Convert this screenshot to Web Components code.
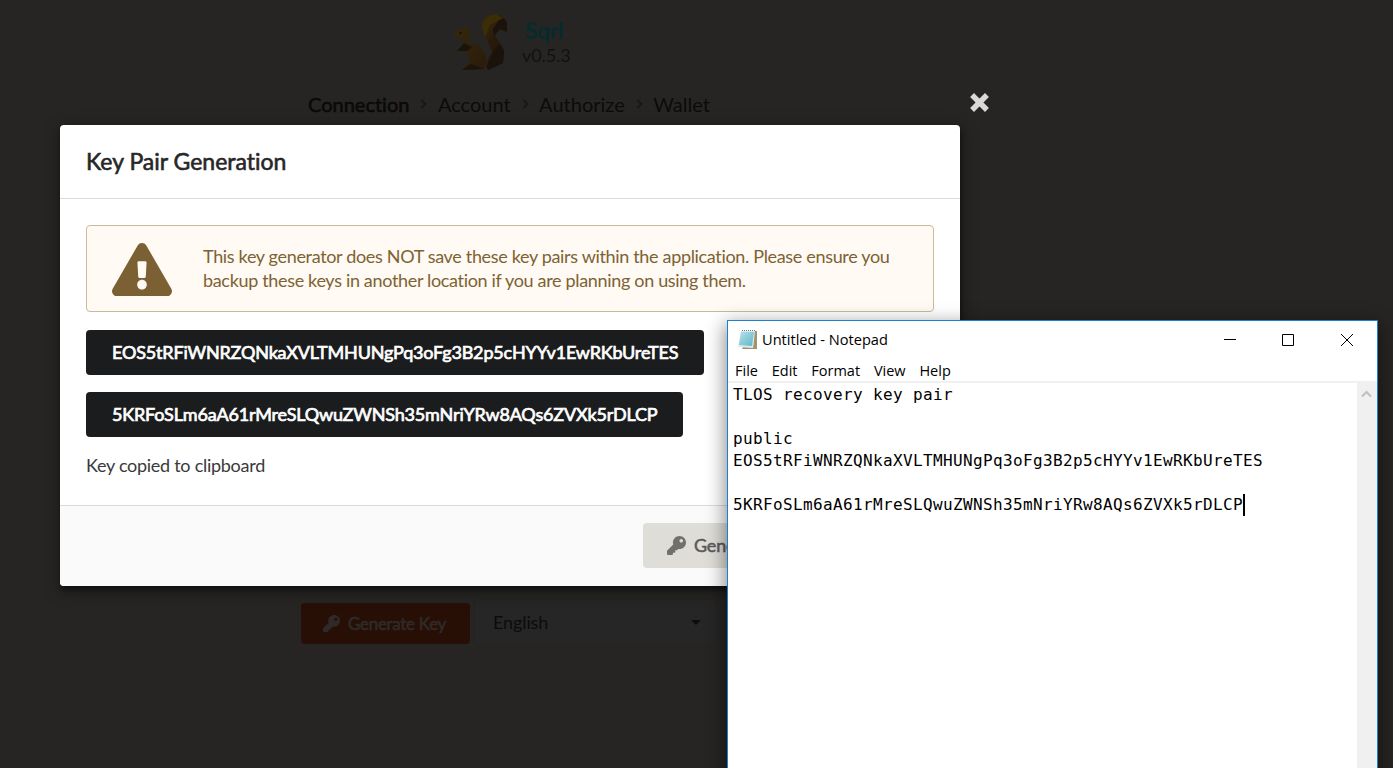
<!DOCTYPE html>
<html lang="en">
<head>
<meta charset="utf-8">
<title>Sqrl</title>
<style>
html,body{margin:0;height:100%;overflow:hidden;background:#262523}
</style>
</head>
<body>
<sqrl-desktop></sqrl-desktop>
<script>
const define = (name, html) => customElements.define(name, class extends HTMLElement {
  constructor() {
    super();
    this.attachShadow({ mode: 'open' }).innerHTML = html;
  }
});

define('key-icon', `
<style>:host{display:block;width:17px;height:17px}svg{display:block;width:100%;height:100%}</style>
<svg viewBox="0 0 512 512"><path fill="currentColor" d="M512 176.001C512 273.203 433.202 352 336 352c-11.220 0-22.190-1.062-32.827-3.069l-24.012 27.014A23.999 23.999 0 0 1 261.223 384H224v40c0 13.255-10.745 24-24 24h-40v40c0 13.255-10.745 24-24 24H24c-13.255 0-24-10.745-24-24v-78.059c0-6.365 2.529-12.470 7.029-16.971l161.802-161.802C163.108 213.814 160 195.271 160 176 160 78.798 238.797.001 335.999 0 433.488-.001 512 78.511 512 176.001zM336 128c0 26.510 21.490 48 48 48s48-21.490 48-48-21.490-48-48-48-48 21.490-48 48z"/></svg>`);

define('squirrel-logo', `
<style>:host{display:block;width:56px;height:57px}svg{display:block}</style>
<svg width="56" height="57" viewBox="0 0 56 57">
<defs>
<linearGradient id="t" x1="0" y1="0" x2=".6" y2="1"><stop offset="0" stop-color="#3c2e07"/><stop offset=".5" stop-color="#291b0b"/><stop offset="1" stop-color="#1d150b"/></linearGradient>
<linearGradient id="b" x1="0" y1="0" x2="1" y2="1"><stop offset="0" stop-color="#35280a"/><stop offset="1" stop-color="#2a1b0a"/></linearGradient>
</defs>
<path fill="url(#t)" d="M29 8 Q34 0 43 0 Q50 1 54 8 L54 18 47 15 Q42 16 42 21 L51 36 50 49 35 56 33 53 36 43 39 38 33 24 29 17Z"/>
<path fill="#1b120b" d="M50 4 54 9 54 18 47 15 41 22 40 15 46 6ZM41 36 47 30 51 37 50 49 35 56 34 52Z"/>
<path fill="#3b2d08" d="M29 13 Q32 1 43 0 L50 4 37 11 32 24Z"/>
<path fill="url(#b)" d="M0 21 6 15 11 15 14 12 16 18 17 24 15 29 25 31 32 39 34 48 31 55 9 56 17 48 14 36 4 37 9 32 10 25Z"/>
<path fill="#1c130b" d="m4 37 7-8 8 4-5 4ZM9 56l9-6 13 5Z"/>
<circle cx="7.500" cy="19" r="1.200" fill="#14100a"/>
</svg>`);

define('bread-crumb', `
<style>
:host{display:flex;align-items:center;font:400 20px/28px Lato,sans-serif;color:#0b0b0b;font-variant-ligatures:none}
svg{display:block;width:7px;height:10px;margin-left:11px;margin-right:10.500px}
path{fill:none;stroke:#171716;stroke-width:2}
.active{-webkit-text-stroke:.6px #090909}
</style>
<span class="active">Connection</span><svg viewBox="0 0 7 10"><path d="m1.500 1 4 4-4 4"/></svg>
<span>Account</span><svg viewBox="0 0 7 10"><path d="m1.500 1 4 4-4 4"/></svg>
<span>Authorize</span><svg viewBox="0 0 7 10"><path d="m1.500 1 4 4-4 4"/></svg>
<span>Wallet</span>`);

define('sqrl-page', `
<style>
:host{display:flex;flex-direction:column;width:1020px;height:768px;font-family:Lato,sans-serif}
header{display:flex;padding:14px 0 0 453px;height:79px;box-sizing:border-box}
.name{padding-left:13px;font-size:18px;color:#111}
b{display:block;font-size:22.500px;line-height:24px;font-weight:700;color:#052c2d;padding:5px 0 0 3px;letter-spacing:-.2px}
.v{display:block;line-height:24px;letter-spacing:-.1px}
bread-crumb{padding:11px 0 0 308px}
.row{display:flex;margin:481px 0 0 301px;align-items:center;gap:4px}
.btn{display:flex;align-items:center;gap:8px;width:169px;height:41px;box-sizing:border-box;margin-top:3px;padding-left:22px;background:#270f06;border-radius:4px;color:#2f2a28;font-size:17px;letter-spacing:-.3px;-webkit-text-stroke:.6px #2f2a28}
.sel{display:flex;align-items:center;justify-content:space-between;width:243px;height:46px;box-sizing:border-box;border:1px solid #232323;border-radius:4px;background:#262626;padding:0 15px 0 18px;font-size:18px;letter-spacing:-.1px;color:#0c0c0c}
i{border:5px solid transparent;border-top-color:#0c0c0c;border-bottom:0}
</style>
<header><squirrel-logo></squirrel-logo><div class="name"><b>Sqrl</b><span class="v">v0.5.3</span></div></header>
<bread-crumb></bread-crumb>
<div class="row"><div class="btn"><key-icon></key-icon><span>Generate Key</span></div><div class="sel"><span>English</span><i></i></div></div>`);

define('warning-message', `
<style>
:host{display:flex;align-items:center;box-sizing:border-box;height:87px;padding-left:25px;border:1px solid #c9ba9b;border-radius:4px;background:#fffaf3;color:#7d6234}
svg{display:block;width:60px;height:53.300px;margin:2px 31px 0 0;flex:none}
.text{font-size:18px;line-height:24px;white-space:nowrap;margin-top:-2px;letter-spacing:-.33px}
</style>
<svg viewBox="0 0 576 512"><path fill="#7a6033" d="M569.517 440.013C587.975 472.007 564.806 512 527.940 512H48.054c-36.937 0-59.999-40.055-41.577-71.987L246.423 23.985c18.467-32.009 64.720-31.951 83.154 0l239.940 416.028zM288 354c-25.405 0-46 20.595-46 46s20.595 46 46 46 46-20.595 46-46-20.595-46-46-46zm-43.673-165.346l7.418 136c.347 6.364 5.609 11.346 11.982 11.346h48.546c6.373 0 11.635-4.982 11.982-11.346l7.418-136c.375-6.874-5.098-12.654-11.982-12.654h-63.383c-6.884 0-12.356 5.780-11.981 12.654z"/></svg>
<div class="text"><slot></slot></div>`);

define('key-button', `
<style>
:host{display:flex;align-items:center;box-sizing:border-box;height:45px;padding:0 26px 1px;border-radius:4px;background:#1b1c1d;color:#fff;font-size:18px;letter-spacing:-.175px;-webkit-text-stroke:.7px #fff}
</style><slot></slot>`);

define('key-modal', `
<style>
:host{display:flex;flex-direction:column;width:900px;height:461px;background:#fff;border-radius:4px;font:400 18px/24px Lato,sans-serif;color:#3a3a3a;box-shadow:1px 4px 5px rgba(0,0,0,.4),1px 4px 16px 2px rgba(0,0,0,.3);overflow:hidden;font-variant-ligatures:none}
h1{margin:0;height:74px;box-sizing:border-box;border-bottom:1px solid #dbdbdc;padding:23px 26px 0;font:400 23px/26px Lato,sans-serif;font-variant-ligatures:none;color:#272727;-webkit-text-stroke:.6px #272727}
section{display:flex;flex-direction:column;align-items:flex-start;padding:26px 26px 0;flex:1}
warning-message{align-self:stretch;margin-bottom:18px}
key-button{margin-bottom:17px}
.copied{margin-top:-1px;letter-spacing:-.27px}
footer{display:flex;justify-content:flex-end;height:81px;box-sizing:border-box;border-top:1px solid #dbdbdc;background:#fafafa;padding:17px 18px 0 0}
.gen{display:flex;align-items:center;gap:8px;width:299px;height:45px;box-sizing:border-box;padding-left:24px;border-radius:4px;background:#dfddd7;color:#5b5a58}
key-icon{color:#71706d;width:19px;height:19px}
.gen span{margin-top:-1px;letter-spacing:-.2px;-webkit-text-stroke:.5px #5b5a58}
</style>
<h1>Key Pair Generation</h1>
<section>
<warning-message>This key generator does NOT save these key pairs within the application. Please ensure you<br>backup these keys in another location if you are planning on using them.</warning-message>
<key-button>EOS5tRFiWNRZQNkaXVLTMHUNgPq3oFg3B2p5cHYYv1EwRKbUreTES</key-button>
<key-button>5KRFoSLm6aA61rMreSLQwuZWNSh35mNriYRw8AQs6ZVXk5rDLCP</key-button>
<span class="copied">Key copied to clipboard</span>
</section>
<footer><div class="gen"><key-icon></key-icon><span>Generate New Key</span></div></footer>`);

define('notepad-window', `
<style>
:host{display:flex;flex-direction:column;box-sizing:border-box;width:651px;height:460px;border:1px solid #1c80cf;background:#fff;color:#000;font:400 16px/20px "Open Sans",sans-serif;box-shadow:0 6px 18px 2px rgba(0,0,0,.45)}
.title{display:flex;align-items:center;height:37px;padding-left:10px;font-size:14.600px}
.title span{margin:-1px auto 0 4px}
.title svg{display:block;flex:none}
.controls{margin-right:23px}
nav{display:flex;height:25px;padding-left:7px;gap:13.800px;font-size:14.500px;line-height:25px;box-sizing:border-box;border-bottom:2px solid #f0f0f0}
.body{display:flex;flex:1}
pre{margin:0;flex:1;padding:1px 0 0 5px;font:16px/22px "DejaVu Sans Mono",monospace;letter-spacing:.368px}
.caret{display:inline-block;width:1.500px;height:22px;background:#000;vertical-align:top}
.bar{width:20px;background:#f0f0f0}
</style>
<div class="title"><svg width="20" height="21" viewBox="0 0 20 21"><defs><linearGradient id="p" x1="0" y1="0" x2="1" y2="1"><stop offset="0" stop-color="#b5e0ea"/><stop offset="1" stop-color="#62b4c8"/></linearGradient></defs><path fill="#a3946c" d="M16 2h3v18H4l1-2h10z"/><path fill="#d5edf2" d="M3 2h14l-2 17-15-1z"/><path fill="url(#p)" d="M3 3h13l-2 14-13-1z"/><path stroke="#777" stroke-dasharray="1 1" d="M4 1.500h13"/></svg><span>Untitled - Notepad</span>
<svg class="controls" width="130" height="14" viewBox="0 0 130 14" fill="none" stroke="#000"><path d="M0 6.500h12M58.500 1.500h11v11h-11zM117 1l12 12M129 1l-12 12"/></svg></div>
<nav><span>File</span><span>Edit</span><span>Format</span><span>View</span><span>Help</span></nav>
<div class="body"><pre>TLOS recovery key pair

public
EOS5tRFiWNRZQNkaXVLTMHUNgPq3oFg3B2p5cHYYv1EwRKbUreTES

5KRFoSLm6aA61rMreSLQwuZWNSh35mNriYRw8AQs6ZVXk5rDLCP<span class="caret"></span></pre>
<div class="bar"><svg width="20" height="22" viewBox="0 0 20 22" fill="none" stroke="#bfbfbf" stroke-width="2"><path d="m5 13.500 4.500-4.500L14 13.500"/></svg></div></div>`);

define('sqrl-desktop', `
<style>
:host{display:block;position:relative;width:1393px;height:768px;overflow:hidden;background:#262523}
key-modal{position:absolute;left:60px;top:125px}
.close{position:absolute;left:970px;top:93px}
notepad-window{position:absolute;left:727px;top:320px}
</style>
<sqrl-page></sqrl-page>
<svg class="close" width="19" height="19" viewBox="0 0 19 19"><path d="m4 4 11 11M15 4 4 15" stroke="#d9d9d9" stroke-width="5.500" stroke-linecap="square" stroke-linejoin="round"/></svg>
<key-modal></key-modal>
<notepad-window></notepad-window>`);
</script>
</body>
</html>
